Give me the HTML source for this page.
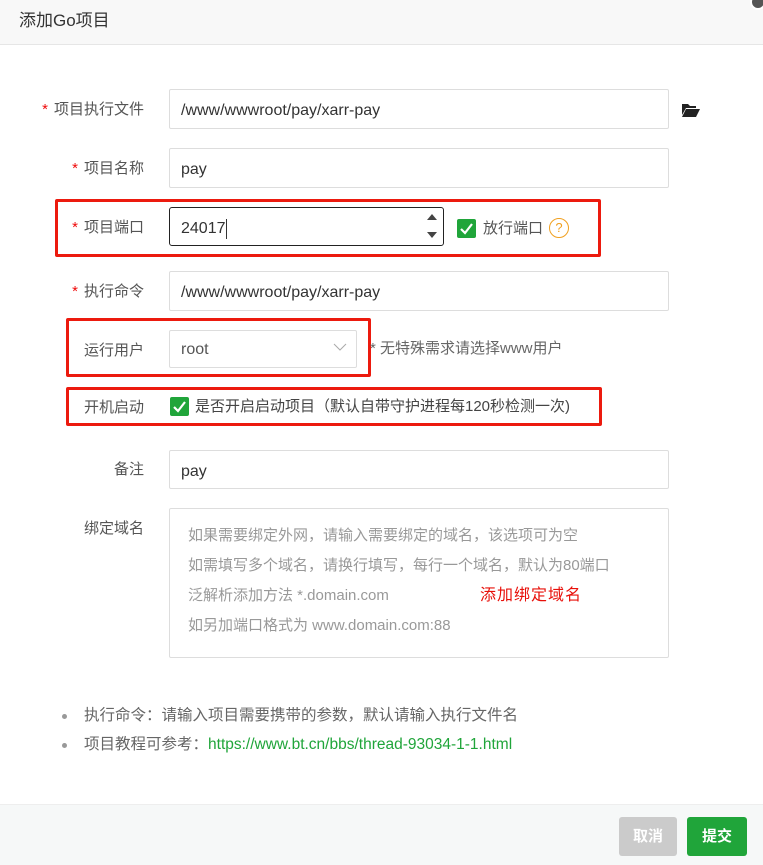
<!DOCTYPE html>
<html><head><meta charset="utf-8"><style>
*{box-sizing:border-box;margin:0;padding:0}
body{width:763px;height:865px;position:relative;background:#fff;font-family:"Liberation Sans","Noto Sans CJK SC",sans-serif;font-size:15px;color:#555;overflow:hidden}
.a{position:absolute}
.hd{left:0;top:0;width:763px;height:45px;background:#f8f8f8;border-bottom:1px solid #e6e6e6}
.lbl{position:absolute;text-align:right;width:140px;left:4px;color:#555;font-size:15px;line-height:22px}
.lbl i{color:#ef0808;font-style:normal;margin-right:6px}
.inp{position:absolute;border:1px solid #ddd;border-radius:2px;left:169px;width:500px;height:40px;padding-left:11px;padding-top:2px;line-height:38px;font-size:16px;color:#333}
.red{position:absolute;border:3px solid #ec1a0e;border-radius:2px}
.cb{position:absolute;width:19px;height:19px;background:#20a53a;border-radius:2px}
.cb svg{position:absolute;left:2px;top:3px}
.ph{color:#999;font-size:15px;position:absolute;left:188px;line-height:22px}
.ft{left:0;top:804px;width:763px;height:61px;background:#f6f8f8;border-top:1px solid #eee}
.btn{position:absolute;top:817px;height:39px;border-radius:3px;color:#fff;font-weight:bold;font-size:15px;text-align:center;line-height:39px}
</style></head><body>
<div class="a hd"></div>
<div class="a" style="left:19px;top:9px;font-size:17px;color:#333;line-height:24px">添加Go项目</div>
<div class="a" style="left:750px;top:-6px;width:16px;height:16px;border-radius:50%;background:#555;border:2px solid #fff"></div>

<div class="lbl" style="top:99px"><i>*</i>项目执行文件</div>
<div class="inp" style="top:89px">/www/wwwroot/pay/xarr-pay</div>
<svg class="a" style="left:681px;top:103px" width="19" height="14" viewBox="0 0 19 14"><path d="M1 1h6l2 2h6v2H5L1 12z" fill="#222"/><path d="M5 6h14l-4 8H1z" fill="#222"/></svg>

<div class="lbl" style="top:158px"><i>*</i>项目名称</div>
<div class="inp" style="top:148px">pay</div>

<div class="red" style="left:55px;top:199px;width:546px;height:58px"></div>
<div class="lbl" style="top:217px"><i>*</i>项目端口</div>
<div class="inp" style="top:207px;width:275px;height:39px;border:1px solid #222;border-radius:3px">24017<span style="display:inline-block;width:1px;height:20px;background:#333;vertical-align:middle"></span></div>
<svg class="a" style="left:426px;top:212px" width="12" height="28"><path d="M1 8l5-6 5 6z M1 20l5 6 5-6z" fill="#444"/></svg>
<div class="cb" style="left:457px;top:219px"><svg width="15" height="13"><path d="M2 7l4 4 7-9" stroke="#fff" stroke-width="2.2" fill="none"/></svg></div>
<div class="a" style="left:483px;top:218px;line-height:22px;color:#555">放行端口</div>
<div class="a" style="left:549px;top:218px;width:20px;height:20px;border:1.5px solid #f0a020;border-radius:50%;color:#f0a020;text-align:center;line-height:17px;font-size:13px">?</div>

<div class="lbl" style="top:281px"><i>*</i>执行命令</div>
<div class="inp" style="top:271px">/www/wwwroot/pay/xarr-pay</div>

<div class="red" style="left:66px;top:318px;width:305px;height:59px"></div>
<div class="lbl" style="top:340px">运行用户</div>
<div class="inp" style="top:330px;width:188px;height:38px;line-height:34px;color:#555">root</div>
<svg class="a" style="left:333px;top:343px" width="14" height="9"><path d="M1 1l6 6 6-6" stroke="#aaa" fill="none"/></svg>
<div class="a" style="left:370px;top:338px;line-height:22px;color:#666;font-size:15px">* 无特殊需求请选择www用户</div>

<div class="red" style="left:66px;top:387px;width:536px;height:39px"></div>
<div class="lbl" style="top:397px">开机启动</div>
<div class="cb" style="left:170px;top:397px"><svg width="15" height="13"><path d="M2 7l4 4 7-9" stroke="#fff" stroke-width="2.2" fill="none"/></svg></div>
<div class="a" style="left:195px;top:396px;line-height:22px;color:#444">是否开启启动项目（默认自带守护进程每120秒检测一次)</div>

<div class="lbl" style="top:459px">备注</div>
<div class="inp" style="top:450px;height:39px">pay</div>

<div class="lbl" style="top:518px">绑定域名</div>
<div class="inp" style="top:508px;height:150px"></div>
<div class="ph" style="top:525px">如果需要绑定外网，请输入需要绑定的域名，该选项可为空</div>
<div class="ph" style="top:555px">如需填写多个域名，请换行填写，每行一个域名，默认为80端口</div>
<div class="ph" style="top:585px">泛解析添加方法 *.domain.com</div>
<div class="a" style="left:480px;top:585px;color:#e8100a;font-size:16px;letter-spacing:1px;line-height:22px">添加绑定域名</div>
<div class="ph" style="top:615px">如另加端口格式为 www.domain.com:88</div>

<div class="a" style="left:62px;top:714px;width:5px;height:5px;border-radius:50%;background:#999"></div>
<div class="a" style="left:84px;top:705px;line-height:22px;color:#666;font-size:15.5px">执行命令：请输入项目需要携带的参数，默认请输入执行文件名</div>
<div class="a" style="left:62px;top:743px;width:5px;height:5px;border-radius:50%;background:#999"></div>
<div class="a" style="left:84px;top:734px;line-height:22px;color:#666;font-size:15.5px">项目教程可参考：<span style="color:#20a53a">https://www.bt.cn/bbs/thread-93034-1-1.html</span></div>

<div class="a ft"></div>
<div class="btn" style="left:619px;width:58px;background:#cbcbcb">取消</div>
<div class="btn" style="left:687px;width:60px;background:#20a53a">提交</div>
</body></html>
